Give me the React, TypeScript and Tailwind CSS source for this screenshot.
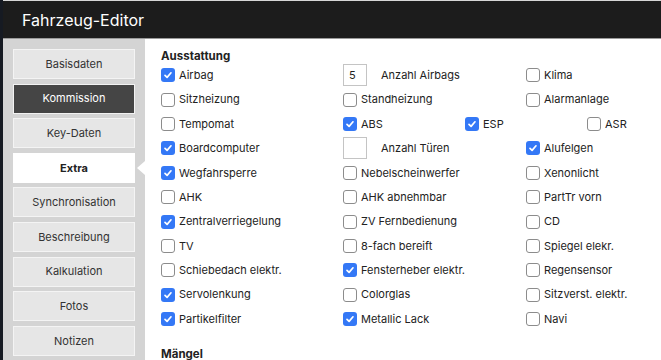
import React from 'react';

type Item = { label: string; checked?: boolean; input?: string };

const tabs = [
  'Basisdaten',
  'Kommission',
  'Key-Daten',
  'Extra',
  'Synchronisation',
  'Beschreibung',
  'Kalkulation',
  'Fotos',
  'Notizen',
];

const col1: Item[] = [
  { label: 'Airbag', checked: true },
  { label: 'Sitzheizung' },
  { label: 'Tempomat' },
  { label: 'Boardcomputer', checked: true },
  { label: 'Wegfahrsperre', checked: true },
  { label: 'AHK' },
  { label: 'Zentralverriegelung', checked: true },
  { label: 'TV' },
  { label: 'Schiebedach elektr.' },
  { label: 'Servolenkung', checked: true },
  { label: 'Partikelfilter', checked: true },
];

const col2: Item[] = [
  { label: 'Anzahl Airbags', input: '5' },
  { label: 'Standheizung' },
  { label: 'ABS', checked: true },
  { label: 'Anzahl Türen', input: '' },
  { label: 'Nebelscheinwerfer' },
  { label: 'AHK abnehmbar' },
  { label: 'ZV Fernbedienung' },
  { label: '8-fach bereift' },
  { label: 'Fensterheber elektr.', checked: true },
  { label: 'Colorglas' },
  { label: 'Metallic Lack', checked: true },
];

const col3: Item[] = [
  { label: 'Klima' },
  { label: 'Alarmanlage' },
  { label: '' },
  { label: 'Alufelgen', checked: true },
  { label: 'Xenonlicht' },
  { label: 'PartTr vorn' },
  { label: 'CD' },
  { label: 'Spiegel elekr.' },
  { label: 'Regensensor' },
  { label: 'Sitzverst. elektr.' },
  { label: 'Navi' },
];

function Box({ checked }: { checked?: boolean }) {
  if (checked) {
    return (
      <span className="flex h-[14px] w-[14px] shrink-0 items-center justify-center rounded-[3px] bg-[#3478f6]">
        <svg width="10" height="10" viewBox="0 0 10 10" fill="none">
          <path d="M2 5.3 L4.1 7.4 L8 2.8" stroke="white" strokeWidth="1.7" strokeLinecap="round" strokeLinejoin="round" />
        </svg>
      </span>
    );
  }
  return <span className="h-[14px] w-[14px] shrink-0 rounded-[3px] border-[1.5px] border-[#8c8c8c] bg-white" />;
}

function Check({ label, checked }: { label: string; checked?: boolean }) {
  return (
    <div className="flex items-center gap-[4px]">
      <Box checked={checked} />
      <span>{label}</span>
    </div>
  );
}

function Cell({ item }: { item: Item }) {
  if (item.input !== undefined) {
    return (
      <div className="flex items-center gap-[14px]">
        <span className="flex h-[22px] w-[24px] shrink-0 items-center border border-[#c4c4c4] pl-[5px] pt-[1px]">{item.input}</span>
        <span>{item.label}</span>
      </div>
    );
  }
  if (!item.label) return <div />;
  return <Check label={item.label} checked={item.checked} />;
}

export default function App() {
  return (
    <div className="h-[360px] w-[661px] overflow-hidden bg-[#161a22] pl-[3px] font-['Inter',sans-serif] text-[11px] text-[#222]">
      <div className="flex h-full flex-col border-t border-[#d6d6d6]">
        <div className="flex h-[38px] shrink-0 items-center border-b border-[#9a9a9a] bg-[#1c1c1c] pl-[19px]">
          <h1 className="text-[16px] text-white">Fahrzeug-Editor</h1>
        </div>
        <div className="flex min-h-0 flex-1">
          <div className="relative flex w-[142px] shrink-0 flex-col gap-[4.6px] bg-[#d4d4d4] px-[10px] pt-[10px]">
            {tabs.map((t) => {
              const active = t === 'Extra';
              const dark = t === 'Kommission';
              return (
                <div
                  key={t}
                  className={
                    'relative flex h-[30px] shrink-0 items-center justify-center border ' +
                    (active
                      ? 'border-white bg-white font-bold text-[#222]'
                      : dark
                        ? 'border-[#f2f2f2] bg-[#454545] text-white'
                        : 'border-[#f4f4f4] bg-[#e6e6e6] text-[#333]')
                  }
                >
                  {t}
                  {active && (
                    <span className="absolute right-[-11px] top-[7px] h-0 w-0 border-y-[7px] border-r-[8px] border-y-transparent border-r-white" />
                  )}
                </div>
              );
            })}
          </div>
          <div className="flex-1 bg-white pl-[16px] pt-[10px]">
            <h2 className="h-[14px] text-[11.5px] font-bold leading-[14px] text-[#222]">Ausstattung</h2>
            <div className="grid grid-cols-[182px_183px_1fr] auto-rows-[24.4px] items-center">
              {col1.map((c1, i) => (
                <React.Fragment key={i}>
                  <Cell item={c1} />
                  {i === 2 ? (
                    <div className="col-span-2 flex">
                      <div className="w-[122px]">
                        <Check label="ABS" checked />
                      </div>
                      <div className="w-[122px]">
                        <Check label="ESP" checked />
                      </div>
                      <div>
                        <Check label="ASR" />
                      </div>
                    </div>
                  ) : (
                    <>
                      <Cell item={col2[i]} />
                      <Cell item={col3[i]} />
                    </>
                  )}
                </React.Fragment>
              ))}
            </div>
            <h2 className="mt-[15px] text-[11.5px] font-bold text-[#222]">Mängel</h2>
          </div>
        </div>
      </div>
    </div>
  );
}
